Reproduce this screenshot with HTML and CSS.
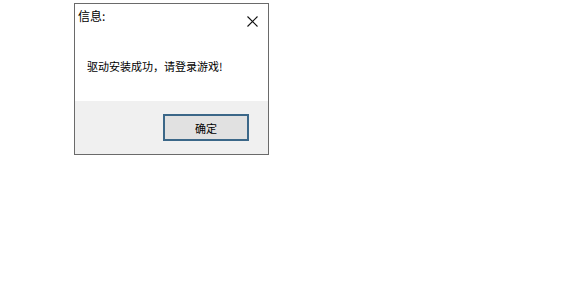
FILE: index.html
```html
<!DOCTYPE html>
<html lang="zh-CN">
<head>
<meta charset="utf-8">
<title>信息</title>
<link rel="stylesheet" href="styles.css">
</head>
<body>
<div class="dialog">
  <div class="titlebar">
    <span class="title">信息:</span>
    <svg class="close" width="11" height="11" viewBox="0 0 11 11">
      <path d="M0.5 0.5 L10.5 10.5 M10.5 0.5 L0.5 10.5" stroke="#111" stroke-width="1.1" fill="none"/>
    </svg>
  </div>
  <div class="content">
    <p class="message">驱动安装成功，请登录游戏!</p>
  </div>
  <div class="footer">
    <button class="btn">确定</button>
  </div>
</div>
</body>
</html>
```

FILE: styles.css
```css
html, body {
  margin: 0;
  padding: 0;
  background: #ffffff;
}
body {
  font-family: "Noto Sans CJK SC", "Microsoft YaHei", sans-serif;
  color: #000;
}
.dialog {
  box-sizing: border-box;
  width: 195px;
  height: 152px;
  margin: 3px 0 0 74px;
  border: 1px solid #6a6a6a;
  background: #fff;
  display: flex;
  flex-direction: column;
}
.titlebar {
  height: 30px;
  display: flex;
  justify-content: space-between;
  align-items: flex-start;
  padding: 4px 10px 0 3px;
  box-sizing: border-box;
}
.title {
  font-size: 12px;
  line-height: 16px;
}
.close {
  display: block;
  margin-top: 8px;
}
.content {
  height: 67px;
  box-sizing: border-box;
  padding: 24px 0 0 12px;
}
.message {
  margin: 0;
  font-size: 11px;
  line-height: 16px;
}
.footer {
  flex: 1;
  background: #f0f0f0;
  display: flex;
  justify-content: flex-end;
  align-items: flex-start;
  padding: 13px 19px 0 0;
}
.btn {
  box-sizing: border-box;
  width: 86px;
  height: 27px;
  border: 2px solid #3b6788;
  background: #e1e1e1;
  font-family: "Noto Sans CJK SC", "Microsoft YaHei", sans-serif;
  font-size: 11px;
  line-height: 14px;
  color: #000;
  padding: 0;
  margin: 0;
}
```
